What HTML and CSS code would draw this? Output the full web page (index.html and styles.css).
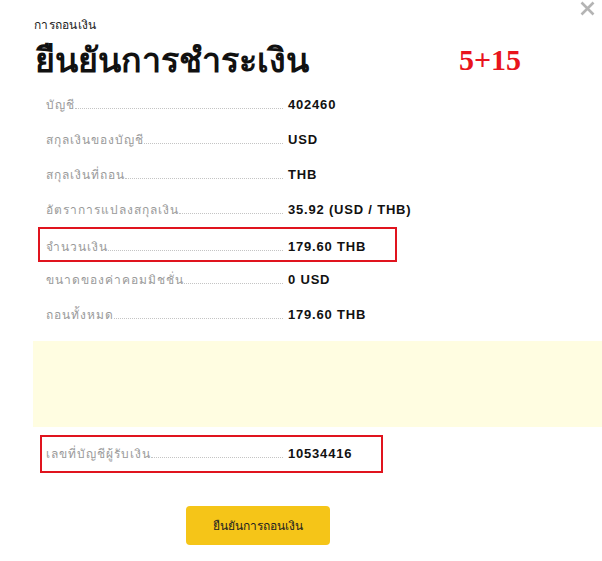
FILE: index.html
```html
<!DOCTYPE html>
<html lang="th">
<head>
    <meta charset="UTF-8">
    <meta name="viewport" content="width=device-width, initial-scale=1.0">
    <title>ยืนยันการชำระเงิน</title>
    <link rel="stylesheet" href="styles.css">
</head>
<body>
<div class="modal">
    <svg class="close" width="15" height="15" viewBox="0 0 15 15">
        <path d="M1.5 1.5 L13.5 13.5 M13.5 1.5 L1.5 13.5" stroke="#b4b4b4" stroke-width="2.6" fill="none"/>
    </svg>

    <div class="subtitle">การถอนเงิน</div>
    <div class="title-row">
        <h1>ยืนยันการชำระเงิน</h1>
        <span class="note">5+15</span>
    </div>

    <div class="details">
        <div class="row">
            <span class="key"><span class="label">บัญชี</span><span class="dots"></span></span>
            <span class="value">402460</span>
        </div>
        <div class="row">
            <span class="key"><span class="label">สกุลเงินของบัญชี</span><span class="dots"></span></span>
            <span class="value">USD</span>
        </div>
        <div class="row">
            <span class="key"><span class="label">สกุลเงินที่ถอน</span><span class="dots"></span></span>
            <span class="value">THB</span>
        </div>
        <div class="row">
            <span class="key"><span class="label">อัตราการแปลงสกุลเงิน</span><span class="dots"></span></span>
            <span class="value">35.92 (USD / THB)</span>
        </div>
        <div class="row marked">
            <span class="key"><span class="label">จำนวนเงิน</span><span class="dots"></span></span>
            <span class="value">179.60 THB</span>
        </div>
        <div class="row">
            <span class="key"><span class="label">ขนาดของค่าคอมมิชชั่น</span><span class="dots"></span></span>
            <span class="value">0 USD</span>
        </div>
        <div class="row">
            <span class="key"><span class="label">ถอนทั้งหมด</span><span class="dots"></span></span>
            <span class="value">179.60 THB</span>
        </div>
    </div>

    <div class="notice"></div>

    <div class="row marked account">
        <span class="key"><span class="label">เลขที่บัญชีผู้รับเงิน</span><span class="dots"></span></span>
        <span class="value">10534416</span>
    </div>

    <div class="actions">
        <button type="button">ยืนยันการถอนเงิน</button>
    </div>
</div>
</body>
</html>
```

FILE: styles.css
```css
/* Reset */
body {
    margin: 0;
    padding: 0;
    background: #ffffff;
    font-family: Tahoma, "DejaVu Sans", "Noto Sans", sans-serif;
    color: #111;
}

/* Modal */
.modal {
    position: relative;
    padding: 16px 0 0 33px;
    overflow: hidden;
    height: 561px;
    box-sizing: border-box;
}

.close {
    position: absolute;
    top: 1px;
    right: 7px;
}

.subtitle {
    font-size: 12px;
    letter-spacing: 0.3px;
    color: #222;
    padding-left: 1px;
    line-height: 18px;
}

.title-row {
    display: flex;
    align-items: center;
    margin-top: 4px;
}

h1 {
    margin: 0;
    font-size: 34px;
    font-weight: bold;
    line-height: 44px;
    width: 424px;
    padding-left: 2px;
}

.note {
    font-family: "Liberation Serif", serif;
    font-weight: bold;
    font-size: 30px;
    color: #e8141c;
}

/* Detail rows */
.details {
    margin-top: 5px;
}

.row {
    display: flex;
    align-items: baseline;
    height: 35px;
    line-height: 35px;
    padding-left: 13px;
    box-sizing: border-box;
}

.key {
    display: flex;
    align-items: baseline;
    width: 237px;
    flex: 0 0 237px;
}

.label {
    font-size: 12px;
    color: #9a9a9a;
    letter-spacing: 1px;
    white-space: nowrap;
}

.dots {
    flex: 1;
    border-bottom: 1px dotted #c4c4c4;
}

.value {
    margin-left: 5px;
    font-family: "Liberation Sans", Arial, sans-serif;
    font-size: 13px;
    font-weight: bold;
    letter-spacing: 0.8px;
    color: #111;
    white-space: nowrap;
}

/* Rows outlined in red */
.marked {
    border: 2px solid #e0141e;
}

.details .marked {
    margin-left: 5px;
    padding-left: 6px;
    width: 359px;
}

/* Yellow notice */
.notice {
    background: #fffde1;
    height: 86px;
    margin-top: 9px;
}

.account {
    margin-top: 8px;
    margin-left: 7px;
    padding-left: 4px;
    width: 343px;
    height: 38px;
    line-height: 34px;
}

/* Confirm button */
.actions {
    padding: 33px 0 0 153px;
}

button {
    width: 144px;
    height: 39px;
    background-color: #f5c518;
    border: none;
    border-radius: 4px;
    font-family: Tahoma, "DejaVu Sans", "Noto Sans", sans-serif;
    font-size: 12px;
    color: #222;
    cursor: pointer;
}
```
